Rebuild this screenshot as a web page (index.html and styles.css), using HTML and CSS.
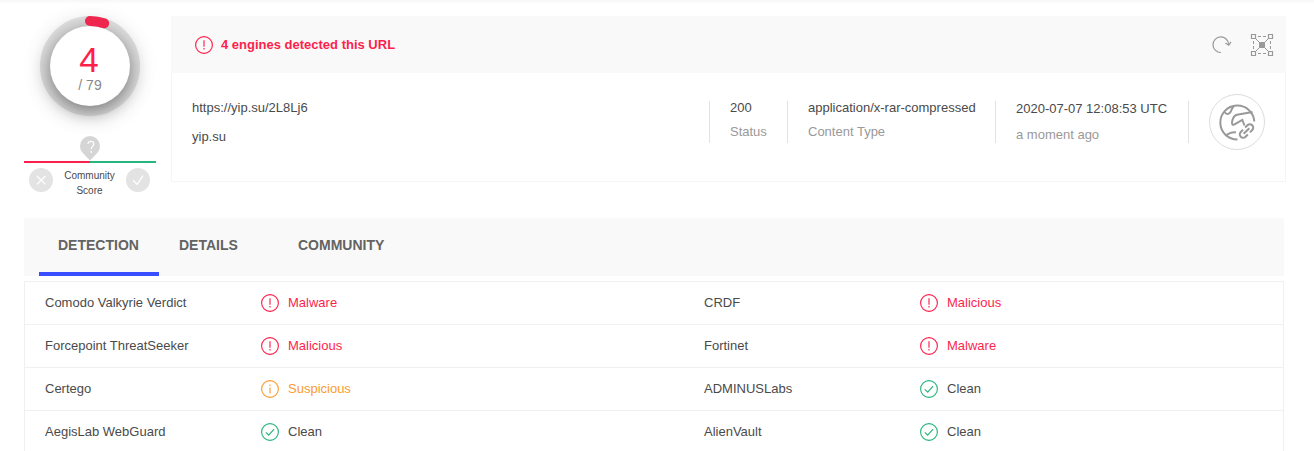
FILE: index.html
```html
<!DOCTYPE html>
<html lang="en">
<head>
  <meta charset="UTF-8">
  <meta name="viewport" content="width=device-width, initial-scale=1.0">
  <title>yip.su - URL report</title>
  <link rel="stylesheet" href="styles.css">
</head>
<body>
  <svg class="sprite" width="0" height="0">
    <symbol id="alert" viewBox="0 0 18 18">
      <circle cx="9" cy="9" r="8.4"/>
      <path d="M9 4.2v6.6M9 12v1.6"/>
    </symbol>
    <symbol id="info" viewBox="0 0 18 18">
      <circle cx="9" cy="9" r="8.4"/>
      <path d="M9 4.4v1.6M9 7.4v6.2"/>
    </symbol>
    <symbol id="check" viewBox="0 0 18 18">
      <circle cx="9" cy="9" r="8.4"/>
      <path d="M4.8 9.3l2.9 2.9 5.4-6"/>
    </symbol>
  </svg>

  <div class="summary">
    <div class="score">
      <div class="ring">
        <div class="dial">
          <div class="positives">4</div>
          <div class="total">/ 79</div>
        </div>
        <svg class="arc" width="100" height="100" viewBox="0 0 100 100">
          <path d="M50 5A45 45 0 0 1 64.1 7.3"/>
        </svg>
      </div>
      <svg class="pin" width="20" height="25" viewBox="0 0 20 25">
        <path class="drop" d="M10 24.5L3 17.2A10 10 0 1 1 17 17.2z"/>
        <path class="mark" d="M8 8c0-3.6 5.8-3.4 5.8-.2 0 2.5-2.6 2.6-2.6 5.4M11.2 15v2"/>
      </svg>
      <div class="bar"></div>
      <div class="community">
        <svg class="vote" width="24" height="24" viewBox="0 0 24 24">
          <circle cx="12" cy="12" r="12"/>
          <path d="M8 8l8.4 8.4M16.4 8L8 16.4"/>
        </svg>
        <div class="label">Community<br>Score</div>
        <svg class="vote" width="24" height="24" viewBox="0 0 24 24">
          <circle cx="12" cy="12" r="12"/>
          <path d="M7 12.3l4.2 4.2 5.8-8.8"/>
        </svg>
      </div>
    </div>

    <div class="card">
      <div class="card-header">
        <svg class="icon red"><use href="#alert"/></svg>
        <span class="headline">4 engines detected this URL</span>
        <svg class="reload" width="20" height="18" viewBox="0 0 20 18">
          <path d="M9 16.5A7.8 7.8 0 1 1 16.6 8.5M13.4 7l3.4 2.2 2.2-3.4"/>
        </svg>
        <svg class="graph" width="22" height="22" viewBox="0 0 22 22">
          <path class="dash" d="M7 2.5h8M7 19.5h8M2.5 7v8M19.5 7v8"/>
          <path d="M4.500 4.500l13 13M17.500 4.500l-13 13"/>
          <path class="fill" d="M8 8h6v6H8z"/>
          <path class="box" d="M.5.5h4v4h-4zM17.500.5h4v4h-4zM.5 17.500h4v4h-4zM17.500 17.500h4v4h-4z"/>
        </svg>
      </div>
      <div class="card-body">
        <div class="url">
          <div>https://yip.su/2L8Lj6</div>
          <div>yip.su</div>
        </div>
        <div class="fact status">
          <div>200</div>
          <div class="muted">Status</div>
        </div>
        <div class="fact type">
          <div>application/x-rar-compressed</div>
          <div class="muted">Content Type</div>
        </div>
        <div class="fact date">
          <div>2020-07-07 12:08:53 UTC</div>
          <div class="muted">a moment ago</div>
        </div>
        <div class="fact kind">
          <svg width="56" height="56" viewBox="0 0 56 56">
            <circle class="rim" cx="28" cy="28" r="27.5"/>
            <path d="M28.5 45.5A17 17 0 1 1 45.3 27.5"/>
            <path d="M15.5 18c2 3 4.5 2.5 6.2-.3 1-1.7 1-3.5 3-5.2"/>
            <path d="M43.5 18L28 20.7c-3 .8-4 2.8-4.8 6.3-.8 3.2.3 4.8 2.8 3.2L33.3 26l2.2 5.500"/>
            <path d="M16.5 42c3.5-3.2 6-4 10.5-3.7"/>
            <g transform="rotate(-45 37.5 37)">
              <path d="M36 33.6h-3.2a3.4 3.4 0 0 0 0 6.8H36M39 33.6h3.2a3.4 3.4 0 0 1 0 6.8H39M33.5 37h8"/>
            </g>
          </svg>
        </div>
      </div>
    </div>
  </div>

  <div class="tabs">
    <div class="tab active">DETECTION</div>
    <div class="tab details">DETAILS</div>
    <div class="tab">COMMUNITY</div>
  </div>

  <div class="results">
    <div class="row">
      <span>Comodo Valkyrie Verdict</span>
      <span class="verdict red"><svg class="icon"><use href="#alert"/></svg>Malware</span>
      <span>CRDF</span>
      <span class="verdict red"><svg class="icon"><use href="#alert"/></svg>Malicious</span>
    </div>
    <div class="row">
      <span>Forcepoint ThreatSeeker</span>
      <span class="verdict red"><svg class="icon"><use href="#alert"/></svg>Malicious</span>
      <span>Fortinet</span>
      <span class="verdict red"><svg class="icon"><use href="#alert"/></svg>Malware</span>
    </div>
    <div class="row">
      <span>Certego</span>
      <span class="verdict orange"><svg class="icon"><use href="#info"/></svg>Suspicious</span>
      <span>ADMINUSLabs</span>
      <span class="verdict"><svg class="icon green"><use href="#check"/></svg>Clean</span>
    </div>
    <div class="row">
      <span>AegisLab WebGuard</span>
      <span class="verdict"><svg class="icon green"><use href="#check"/></svg>Clean</span>
      <span>AlienVault</span>
      <span class="verdict"><svg class="icon green"><use href="#check"/></svg>Clean</span>
    </div>
  </div>
</body>
</html>
```
FILE: styles.css
```css
* {
  box-sizing: border-box;
}

body {
  margin: 0;
  height: 451px;
  overflow: hidden;
  background: linear-gradient(#f7f7f7, #fff 4px);
  color: #4a4a4a;
  font-family: "Liberation Sans", Arial, sans-serif;
  font-size: 13px;
  line-height: 16px;
}

svg {
  fill: none;
  stroke: currentColor;
  flex: none;
}

.sprite {
  display: block;
}

.icon {
  width: 18px;
  height: 18px;
  stroke-width: 1.15;
}

.red {
  color: #fd1f4b;
}

.orange {
  color: #fb9b33;
}

.green {
  color: #29b57e;
}

.muted {
  color: #999;
}

/* summary */
.summary {
  display: flex;
  padding: 16px 28px 0 24px;
  height: 218px;
}

.score {
  display: flex;
  flex-direction: column;
  align-items: center;
  width: 132px;
  margin-right: 15px;
}

.ring {
  position: relative;
  width: 100px;
  height: 100px;
  padding: 10px;
  border-radius: 50%;
  background: #e0e0e0;
  box-shadow: 0 2px 24px rgba(0, 0, 0, 0.05);
}

.dial {
  width: 80px;
  height: 80px;
  padding-top: 16px;
  border-radius: 50%;
  background: #fff;
  box-shadow: 0 5px 20px rgba(0, 0, 0, 0.5);
  text-align: center;
}

.positives {
  color: #ff1f4b;
  font-size: 35px;
  line-height: 36px;
  margin-left: -2px;
}

.total {
  color: #888;
  font-size: 14px;
  line-height: 14px;
}

.arc {
  position: absolute;
  top: 0;
  left: 0;
  color: #ef264d;
  stroke-width: 10;
  stroke-linecap: round;
}

.pin {
  margin-top: 20px;
}

.pin .drop {
  fill: #d5d5d5;
  stroke: none;
}

.pin .mark {
  stroke: #fff;
  stroke-width: 1.2;
}

.bar {
  width: 132px;
  height: 2px;
  background: linear-gradient(90deg, #fd1f4b 50%, #29b57e 50%);
}

.community {
  display: flex;
  justify-content: space-between;
  width: 132px;
  margin-top: 5px;
  padding: 0 6px 0 5px;
}

.vote circle {
  fill: #e3e3e3;
  stroke: none;
}

.vote path {
  stroke: #fff;
  stroke-width: 1.3;
}

.label {
  font-size: 10px;
  line-height: 15px;
  text-align: center;
}

.card {
  flex: 1;
  height: 166px;
  border: 1px solid #f5f5f5;
  border-top: 0;
}

.card-header {
  display: flex;
  align-items: center;
  height: 57px;
  margin: 0 -1px;
  padding: 0 13px 0 24px;
  background: #f9f9f9;
  color: #999;
}

.headline {
  flex: 1;
  margin-left: 8px;
  color: #fd1f4b;
  font-weight: bold;
}

.reload {
  margin-right: 19px;
  stroke-width: 1.2;
}

.graph {
  overflow: visible;
}

.graph .dash {
  stroke-dasharray: 3 2;
}

.graph .fill {
  fill: currentColor;
  stroke: none;
}

.graph .box {
  fill: #f9f9f9;
  stroke-width: 1.2;
}

.card-body {
  display: flex;
  padding: 21px 20px 0;
}

.url {
  flex: 1;
  padding-top: 6px;
}

.url div + div {
  margin-top: 13px;
}

.fact {
  height: 42px;
  margin-top: 7px;
  padding: 0 20px;
  border-left: 1px solid #e3e3e3;
  line-height: 14px;
  white-space: nowrap;
}

.fact .muted {
  margin-top: 10px;
}

.status {
  width: 78px;
}

.type {
  width: 208px;
}

.date {
  width: 193px;
  padding-top: 1px;
}

.date .muted {
  margin-top: 12px;
}

.kind {
  padding-right: 0;
  color: #999;
}

.kind svg {
  display: block;
  margin-top: -7px;
  stroke-width: 2;
}

.kind .rim {
  stroke: #dcdcdc;
  stroke-width: 1;
}

/* tabs */
.tabs {
  display: flex;
  width: 1260px;
  height: 58px;
  margin-left: 24px;
  padding-left: 15px;
  background: #f9f9f9;
  color: #636363;
  font-size: 14px;
  font-weight: bold;
}

.tab {
  height: 58px;
  padding: 19px 20px 0;
}

.tab.active {
  width: 120px;
  padding-left: 19px;
  border-bottom: 4px solid #3b4eff;
}

.tab.details {
  width: 119px;
}

/* engines */
.results {
  width: 1260px;
  margin: 5px 0 0 24px;
  border: 1px solid #f0f0f0;
}

.row {
  display: grid;
  grid-template-columns: 216px 443px 216px 1fr;
  align-items: center;
  height: 43px;
  padding-left: 20px;
  border-bottom: 1px solid #f0f0f0;
}

.verdict {
  display: flex;
  align-items: center;
}

.verdict .icon {
  margin-right: 9px;
}
```
